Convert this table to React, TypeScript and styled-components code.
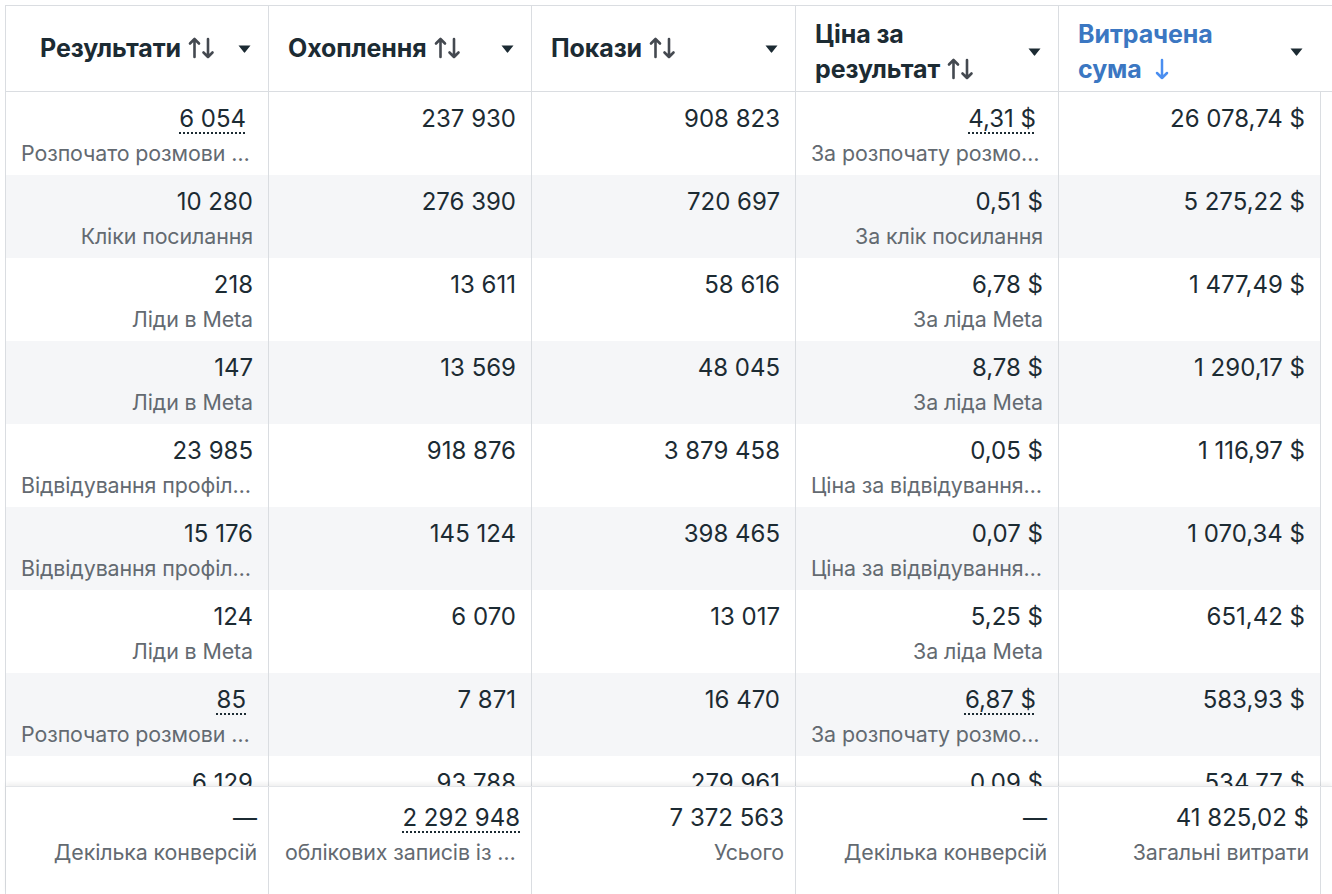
import React from 'react';
import styled, {createGlobalStyle} from 'styled-components';

const GlobalStyle = createGlobalStyle`
  html, body {
    margin: 0;
    padding: 0;
    background: #ffffff;
  }
  body {
    font-family: Inter, "Noto Sans", "Liberation Sans", sans-serif;
    color: #1c2b33;
    overflow: hidden;
  }
`;

const line = '#dadde1';
const COLS = '263px 263px 264px 263px 262px';

const Page = styled.div`
  padding: 5px 0 0 5px;
  height: 894px;
  box-sizing: border-box;
`;

const Table = styled.div`
  display: flex;
  flex-direction: column;
  border-left: 1px solid ${line};
  height: 889px;
`;

const HeaderRow = styled.div`
  display: grid;
  grid-template-columns: 263px 263px 264px 263px 1fr;
  height: 85px;
  border-top: 1px solid ${line};
  border-bottom: 1px solid ${line};
`;

const HeaderCell = styled.div<{$wrap?: boolean; $first?: boolean}>`
  display: flex;
  align-items: center;
  justify-content: space-between;
  gap: 8px;
  padding: ${p => (p.$wrap ? '6px' : '0')} 17px 0 ${p => (p.$first ? '34px' : '19px')};
  border-right: 1px solid ${line};
  box-sizing: border-box;

  &:last-child {
    border-right: none;
    padding-right: 29px;
  }
`;

const HeaderLabel = styled.div<{$active?: boolean}>`
  font-size: 25px;
  line-height: 35px;
  font-weight: 700;
  letter-spacing: -0.1px;
  color: ${p => (p.$active ? '#3b77c2' : '#1c2b33')};
`;

const Body = styled.div`
  height: 694px;
  overflow: hidden;
`;

const Row = styled.div<{$shade: boolean}>`
  display: grid;
  grid-template-columns: ${COLS};
  width: max-content;
  height: 83px;
  background: ${p => (p.$shade ? '#f5f6f8' : '#ffffff')};
`;

const Cell = styled.div`
  display: flex;
  flex-direction: column;
  align-items: flex-end;
  padding: 12px 15px 0 15px;
  border-right: 1px solid ${line};
  box-sizing: border-box;
  min-width: 0;
`;

const Value = styled.span<{$dotted?: boolean; $flush?: boolean}>`
  font-size: 24px;
  line-height: 30px;
  color: #1c2b33;
  white-space: nowrap;
  margin-right: ${p => (p.$dotted && !p.$flush ? '7px' : '0')};
  text-decoration: ${p => (p.$dotted ? 'underline dotted 2px' : 'none')};
  text-underline-offset: 5px;
`;

const Label = styled.span`
  margin-top: 5px;
  padding-left: 1px;
  font-size: 21.4px;
  line-height: 28px;
  letter-spacing: -0.1px;
  color: #636a71;
  white-space: nowrap;
  overflow: hidden;
  text-overflow: ellipsis;
  max-width: 100%;
  text-align: right;
`;

const Footer = styled.div`
  display: grid;
  grid-template-columns: ${COLS};
  flex: 1;
  border-top: 1px solid #e3e5e8;
  box-shadow: 0 -3px 4px rgba(0, 0, 0, 0.06);
  position: relative;
  background: #ffffff;
`;

const FooterCell = styled(Cell)`
  padding: 16px 11px 0 16px;
`;

const SortIcon = ({color = '#444950'}: {color?: string}) => (
  <svg width="30" height="24" viewBox="0 0 30 24" style={{verticalAlign: '-3px', marginLeft: 7}}>
    <g fill="none" stroke={color} strokeWidth="2.6" strokeLinecap="round" strokeLinejoin="round">
      <path d="M6.5 21V3M2 7.5L6.5 3 11 7.5" />
      <path d="M20 3v18M15.5 16.5L20 21l4.5-4.5" />
    </g>
  </svg>
);

const DownIcon = () => (
  <svg width="24" height="24" viewBox="0 0 24 24" style={{verticalAlign: '-3px', marginLeft: 8}}>
    <g fill="none" stroke="#4a8ef0" strokeWidth="2.5" strokeLinecap="round" strokeLinejoin="round">
      <path d="M12 3v18M7 16l5 5 5-5" />
    </g>
  </svg>
);

const Caret = () => (
  <svg width="13" height="8" viewBox="0 0 13 8" style={{flexShrink: 0}}>
    <path d="M0.5 0.5h12L7.3 7.1a1 1 0 0 1-1.6 0z" fill="#1c2b33" />
  </svg>
);

type Metric = {value: string; label?: string; dotted?: boolean};
type Line = [Metric, Metric, Metric, Metric, Metric];

const chat = 'Розпочато розмови з повідомленнями';
const chatCost = 'За розпочату розмову з повідомленнями';
const profile = 'Відвідування профілю Instagram';
const profileCost = 'Ціна за відвідування профілю Instagram';

const rows: Line[] = [
  [{value: '6 054', label: chat, dotted: true}, {value: '237 930'}, {value: '908 823'}, {value: '4,31 $', label: chatCost, dotted: true}, {value: '26 078,74 $'}],
  [{value: '10 280', label: 'Кліки посилання'}, {value: '276 390'}, {value: '720 697'}, {value: '0,51 $', label: 'За клік посилання'}, {value: '5 275,22 $'}],
  [{value: '218', label: 'Ліди в Meta'}, {value: '13 611'}, {value: '58 616'}, {value: '6,78 $', label: 'За ліда Meta'}, {value: '1 477,49 $'}],
  [{value: '147', label: 'Ліди в Meta'}, {value: '13 569'}, {value: '48 045'}, {value: '8,78 $', label: 'За ліда Meta'}, {value: '1 290,17 $'}],
  [{value: '23 985', label: profile}, {value: '918 876'}, {value: '3 879 458'}, {value: '0,05 $', label: profileCost}, {value: '1 116,97 $'}],
  [{value: '15 176', label: profile}, {value: '145 124'}, {value: '398 465'}, {value: '0,07 $', label: profileCost}, {value: '1 070,34 $'}],
  [{value: '124', label: 'Ліди в Meta'}, {value: '6 070'}, {value: '13 017'}, {value: '5,25 $', label: 'За ліда Meta'}, {value: '651,42 $'}],
  [{value: '85', label: chat, dotted: true}, {value: '7 871'}, {value: '16 470'}, {value: '6,87 $', label: chatCost, dotted: true}, {value: '583,93 $'}],
  // last row sits under the totals bar, only its values peek out
  [{value: '6 129'}, {value: '93 788'}, {value: '279 961'}, {value: '0,09 $'}, {value: '534,77 $'}],
];

const totals: Line = [
  {value: '—', label: 'Декілька конверсій'},
  {value: '2 292 948', label: 'облікових записів із Центру облікових записів', dotted: true},
  {value: '7 372 563', label: 'Усього'},
  {value: '—', label: 'Декілька конверсій'},
  {value: '41 825,02 $', label: 'Загальні витрати'},
];

// columns that carry a second, grey line under the value
const withLabel = [true, false, false, true, false];

const nb = (s: string) => s.replace(/ /g, '\u00a0');

export default function App() {
  return (
    <Page>
      <GlobalStyle />
      <Table>
        <HeaderRow>
          <HeaderCell $first>
            <HeaderLabel>
              Результати
              <SortIcon />
            </HeaderLabel>
            <Caret />
          </HeaderCell>
          <HeaderCell>
            <HeaderLabel>
              Охоплення
              <SortIcon />
            </HeaderLabel>
            <Caret />
          </HeaderCell>
          <HeaderCell>
            <HeaderLabel>
              Покази
              <SortIcon />
            </HeaderLabel>
            <Caret />
          </HeaderCell>
          <HeaderCell $wrap>
            <HeaderLabel>
              Ціна за
              <br />
              результат
              <SortIcon />
            </HeaderLabel>
            <Caret />
          </HeaderCell>
          <HeaderCell $wrap>
            <HeaderLabel $active>
              Витрачена
              <br />
              сума
              <DownIcon />
            </HeaderLabel>
            <Caret />
          </HeaderCell>
        </HeaderRow>
        <Body>
          {rows.map((row, i) => (
            <Row key={i} $shade={i % 2 === 1}>
              {row.map((m, j) => (
                <Cell key={j}>
                  <Value $dotted={m.dotted}>{nb(m.value)}</Value>
                  {m.label && withLabel[j] && <Label>{m.label}</Label>}
                </Cell>
              ))}
            </Row>
          ))}
        </Body>
        <Footer>
          {totals.map((m, j) => (
            <FooterCell key={j}>
              <Value $dotted={m.dotted} $flush>
                {nb(m.value)}
              </Value>
              <Label>{m.label}</Label>
            </FooterCell>
          ))}
        </Footer>
      </Table>
    </Page>
  );
}
